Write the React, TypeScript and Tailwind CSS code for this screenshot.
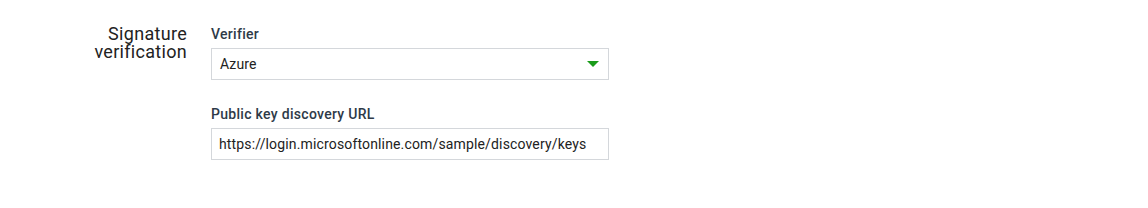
import React from 'react';

const App: React.FC = () => {
    return (
        <div className="w-[1148px] h-[208px] bg-white font-['Roboto',sans-serif]">
            <div className="flex pt-[25px]">
                <div className="w-[188px] pr-[1px] text-right text-[18px] leading-[18px] tracking-[0.3px] text-[#222]">
                    Signature
                    <br />
                    verification
                </div>
                <div className="ml-[23px] w-[398px] flex flex-col">
                    <label className="text-[14px] leading-[18px] font-medium tracking-[0.3px] text-[#2e3a48]">Verifier</label>
                    <div className="mt-[5px] h-[32px] border border-[#d4d7db] flex items-center justify-between pl-[8px] pr-[8px] text-[14px] tracking-[0.15px] text-[#222]">
                        <span>Azure</span>
                        <svg width="12" height="6" viewBox="0 0 12 6" className="mr-[1px]">
                            <polygon points="0,0 12,0 6,6" fill="#1a9c1a" />
                        </svg>
                    </div>
                    <label className="mt-[25px] text-[14px] leading-[18px] font-medium tracking-[0.3px] text-[#2e3a48]">Public key discovery URL</label>
                    <div className="mt-[5px] h-[32px] border border-[#d4d7db] flex items-center pl-[7px] text-[14px] tracking-[0.15px] text-[#222]">
                        https://login.microsoftonline.com/sample/discovery/keys
                    </div>
                </div>
            </div>
        </div>
    );
};

export default App;
